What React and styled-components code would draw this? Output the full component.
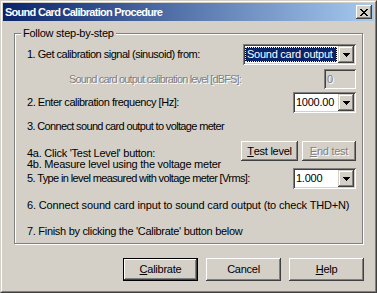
import React from "react";
import styled, { createGlobalStyle } from "styled-components";

const GlobalStyle = createGlobalStyle`
  html, body {
    margin: 0;
    padding: 0;
    background: #d4d0c8;
  }
  body {
    font-family: "Liberation Sans", Arial, sans-serif;
    font-size: 11px;
    letter-spacing: -0.25px;
    color: #000;
  }
`;

const Window = styled.div`
  width: 377px;
  height: 293px;
  box-sizing: border-box;
  background: #d4d0c8;
  border: 1px solid;
  border-color: #d4d0c8 #404040 #404040 #d4d0c8;
  display: flex;
  flex-direction: column;
`;

const Frame = styled.div`
  flex: 1;
  display: flex;
  flex-direction: column;
  border: 1px solid;
  border-color: #fff #808080 #808080 #fff;
  padding: 1px;
`;

const TitleBar = styled.div`
  height: 18px;
  display: flex;
  align-items: center;
  justify-content: space-between;
  padding: 0 2px 0 2px;
  background: linear-gradient(to right, #0a246a, #a6caf0);
`;

const Title = styled.span`
  color: #fff;
  font-weight: bold;
  font-size: 11px;
  letter-spacing: -0.72px;
`;

const CloseButton = styled.div`
  width: 16px;
  height: 14px;
  box-sizing: border-box;
  background: #d4d0c8;
  box-shadow: inset -1px -1px #404040, inset 1px 1px #fff,
    inset -2px -2px #808080;
  display: flex;
  align-items: center;
  justify-content: center;
`;

const Body = styled.div`
  flex: 1;
  display: flex;
  flex-direction: column;
  padding: 12px 10px 0 11px;
`;

const GroupBox = styled.div`
  position: relative;
  width: 349px;
  box-sizing: border-box;
  border: 1px solid #808080;
  box-shadow: inset 1px 1px #fff, 1px 1px #fff;
  padding: 10px 6px 5px 12px;
  display: flex;
  flex-direction: column;
`;

const Legend = styled.span`
  position: absolute;
  left: 6px;
  top: -7px;
  padding: 0 2px;
  background: #d4d0c8;
  line-height: 13px;
`;

const Row = styled.div`
  display: flex;
  align-items: ${(p) => p.align || "center"};
  justify-content: space-between;
  height: ${(p) => p.h}px;
  margin-top: ${(p) => p.mt || 0}px;
`;

const Label = styled.span`
  line-height: 13px;
  white-space: nowrap;
  padding-left: ${(p) => p.indent || 0}px;
  letter-spacing: ${(p) => (p.ls != null ? p.ls : -0.25)}px;
  ${(p) =>
    p.disabled &&
    `
    color: #808080;
    text-shadow: 1px 1px #fff;
  `}
`;

const Stack = styled.div`
  display: flex;
  flex-direction: column;
  padding-top: 7px;
  line-height: 11px;
  white-space: nowrap;
`;

const Combo = styled.div`
  width: ${(p) => p.w}px;
  height: 21px;
  box-sizing: border-box;
  background: #fff;
  box-shadow: inset 1px 1px #808080, inset -1px -1px #fff,
    inset 2px 2px #404040, inset -2px -2px #d4d0c8;
  padding: 2px;
  display: flex;
  align-items: stretch;
`;

const ComboText = styled.div`
  flex: 1;
  display: flex;
  align-items: center;
  padding-left: 1px;
  line-height: 13px;
  white-space: nowrap;
  overflow: hidden;
`;

const Focus = styled.div`
  flex: 1;
  margin: 1px 1px 1px 0;
  background: #000;
  display: flex;
`;

const Selected = styled.span`
  flex: 1;
  border: 1px dotted #ffff60;
  background: #0a246a;
  background-clip: padding-box;
  color: #fff;
  line-height: 13px;
  padding-left: 1px;
  white-space: nowrap;
  overflow: hidden;
`;

const DropButton = styled.div`
  width: 16px;
  box-sizing: border-box;
  background: #d4d0c8;
  box-shadow: inset -1px -1px #404040, inset 1px 1px #d4d0c8,
    inset -2px -2px #808080, inset 2px 2px #fff;
  display: flex;
  align-items: center;
  justify-content: center;
`;

const Edit = styled.div`
  width: 32px;
  height: 20px;
  box-sizing: border-box;
  background: #d4d0c8;
  box-shadow: inset 1px 1px #808080, inset -1px -1px #fff,
    inset 2px 2px #404040, inset -2px -2px #d4d0c8;
  padding: 2px 3px;
  line-height: 16px;
  color: #808080;
  text-shadow: 1px 1px #fff;
`;

const ButtonGroup = styled.div`
  display: flex;
  gap: 4px;
`;

const Button = styled.div`
  width: ${(p) => p.w}px;
  height: ${(p) => p.h || 20}px;
  box-sizing: border-box;
  background: #d4d0c8;
  box-shadow: ${(p) =>
    p.default
      ? "inset 0 0 0 1px #000, inset -2px -2px #404040, inset 2px 2px #fff, inset -3px -3px #808080"
      : "inset -1px -1px #404040, inset 1px 1px #fff, inset -2px -2px #808080"};
  display: flex;
  align-items: center;
  justify-content: center;
  line-height: 13px;
  white-space: nowrap;
  ${(p) =>
    p.disabled &&
    `
    color: #808080;
    text-shadow: 1px 1px #fff;
  `}
`;

const Footer = styled.div`
  display: flex;
  justify-content: flex-end;
  gap: 8px;
  margin-top: 14px;
`;

const Arrow = () => (
  <svg width="7" height="4" viewBox="0 0 7 4">
    <path d="M0 0h7v1h-1v1h-1v1h-1v1h-1v-1h-1v-1h-1v-1h-1z" fill="#000" />
  </svg>
);

const CloseGlyph = () => (
  <svg width="8" height="7" viewBox="0 0 8 7">
    <path
      d="M0 0h2v1h1v1h2v-1h1v-1h2v1h-1v1h-1v1h-1v1h1v1h1v1h1v1h-2v-1h-1v-1h-2v1h-1v1h-2v-1h1v-1h1v-1h1v-1h-1v-1h-1v-1h-1z"
      fill="#000"
    />
  </svg>
);

const ComboBox = ({ w, children, focused }) => (
  <Combo w={w}>
    {focused ? (
      <Focus>
        <Selected>{children}</Selected>
      </Focus>
    ) : (
      <ComboText>{children}</ComboText>
    )}
    <DropButton>
      <Arrow />
    </DropButton>
  </Combo>
);

const Key = styled.u`
  text-decoration: underline;
`;

export default function App() {
  return (
    <>
      <GlobalStyle />
      <Window>
        <Frame>
          <TitleBar>
            <Title>Sound Card Calibration Procedure</Title>
            <CloseButton>
              <CloseGlyph />
            </CloseButton>
          </TitleBar>
          <Body>
            <GroupBox>
              <Legend>Follow step-by-step</Legend>
              <Row h={21}>
                <Label ls={-0.5}>1. Get calibration signal (sinusoid) from:</Label>
                <ComboBox w={113} focused>
                  Sound card output
                </ComboBox>
              </Row>
              <Row h={20} mt={4}>
                <Label indent={42} ls={-0.85} disabled>
                  Sound card output calibration level [dBFS]:
                </Label>
                <Edit>0</Edit>
              </Row>
              <Row h={21} mt={3}>
                <Label ls={-0.47}>2. Enter calibration frequency [Hz]:</Label>
                <ComboBox w={63}>1000.00</ComboBox>
              </Row>
              <Row h={13} mt={7}>
                <Label ls={-0.65}>3. Connect sound card output to voltage meter</Label>
              </Row>
              <Row h={27} mt={8} align="flex-start">
                <Stack>
                  <span>4a. Click 'Test Level' button:</span>
                  <span>4b. Measure level using the voltage meter</span>
                </Stack>
                <ButtonGroup>
                  <Button w={57}>
                    <Key>T</Key>est level
                  </Button>
                  <Button w={54} disabled>
                    <Key>E</Key>nd test
                  </Button>
                </ButtonGroup>
              </Row>
              <Row h={21}>
                <Label ls={-0.62}>
                  5. Type in level measured with voltage meter [Vrms]:
                </Label>
                <ComboBox w={63}>1.000</ComboBox>
              </Row>
              <Row h={13} mt={10}>
                <Label ls={-0.15}>
                  6. Connect sound card input to sound card output (to check THD+N)
                </Label>
              </Row>
              <Row h={13} mt={13}>
                <Label ls={-0.3}>
                  7. Finish by clicking the 'Calibrate' button below
                </Label>
              </Row>
            </GroupBox>
            <Footer>
              <Button w={75} h={23} default>
                <Key>C</Key>alibrate
              </Button>
              <Button w={75} h={23}>
                Cancel
              </Button>
              <Button w={75} h={23}>
                <Key>H</Key>elp
              </Button>
            </Footer>
          </Body>
        </Frame>
      </Window>
    </>
  );
}
